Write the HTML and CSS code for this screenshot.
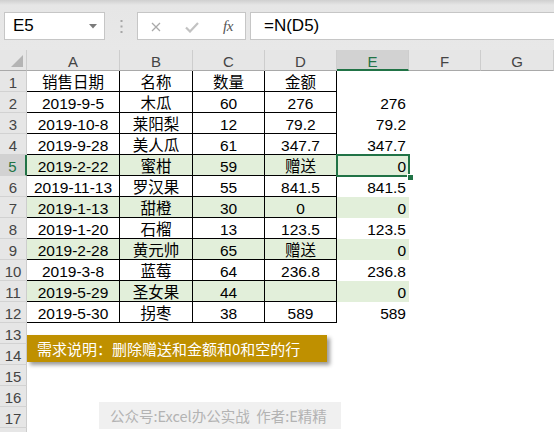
FILE: index.html
```html
<!DOCTYPE html>
<html lang="zh">
<head>
<meta charset="utf-8">
<title>Excel</title>
<link rel="stylesheet" href="styles.css">
</head>
<body>
<div class="app">
  <div class="toolbar">
    <div class="namebox"><span class="nb-text">E5</span><svg class="caret" width="8" height="5" viewBox="0 0 8 5"><path d="M0 0H8L4 4.5Z" fill="#7a7a7a"/></svg></div>
    <svg class="grip" width="3" height="13" viewBox="0 0 3 13"><rect x="0.5" y="0" width="2" height="2" fill="#a6a6a6"/><rect x="0.5" y="5.5" width="2" height="2" fill="#a6a6a6"/><rect x="0.5" y="11" width="2" height="2" fill="#a6a6a6"/></svg>
    <div class="fnbox">
      <svg class="ico-x" width="10" height="10" viewBox="0 0 10 10"><path d="M1 1L9 9M9 1L1 9" stroke="#a9a9a9" stroke-width="1.3" fill="none"/></svg>
      <svg class="ico-ok" width="14" height="11" viewBox="0 0 14 11"><path d="M1 5.5L5 9.5L13 1" stroke="#c2c2c2" stroke-width="2.2" fill="none"/></svg>
      <span class="fx">fx</span>
    </div>
    <div class="formula">=N(D5)</div>
  </div>
  <div class="sheet">
    <div class="grid">
      <div class="corner"><svg width="12" height="12" viewBox="0 0 12 12"><path d="M12 0V12H0Z" fill="#b4b4b4"/></svg></div>
      <div class="ch">A</div><div class="ch">B</div><div class="ch">C</div><div class="ch">D</div><div class="ch cur">E</div><div class="ch">F</div><div class="ch">G</div>

      <div class="rh">1</div><div class="c b">销售日期</div><div class="c b">名称</div><div class="c b">数量</div><div class="c b">金额</div><div class="c r"></div><div class="c"></div><div class="c"></div>
      <div class="rh">2</div><div class="c b">2019-9-5</div><div class="c b">木瓜</div><div class="c b">60</div><div class="c b">276</div><div class="c r">276</div><div class="c"></div><div class="c"></div>
      <div class="rh">3</div><div class="c b">2019-10-8</div><div class="c b">莱阳梨</div><div class="c b">12</div><div class="c b">79.2</div><div class="c r">79.2</div><div class="c"></div><div class="c"></div>
      <div class="rh">4</div><div class="c b">2019-9-28</div><div class="c b">美人瓜</div><div class="c b">61</div><div class="c b">347.7</div><div class="c r">347.7</div><div class="c"></div><div class="c"></div>
      <div class="rh cur">5</div><div class="c b g">2019-2-22</div><div class="c b g">蜜柑</div><div class="c b g">59</div><div class="c b g">赠送</div><div class="c r g sel">0</div><div class="c"></div><div class="c"></div>
      <div class="rh">6</div><div class="c b">2019-11-13</div><div class="c b">罗汉果</div><div class="c b">55</div><div class="c b">841.5</div><div class="c r">841.5</div><div class="c"></div><div class="c"></div>
      <div class="rh">7</div><div class="c b g">2019-1-13</div><div class="c b g">甜橙</div><div class="c b g">30</div><div class="c b g">0</div><div class="c r g">0</div><div class="c"></div><div class="c"></div>
      <div class="rh">8</div><div class="c b">2019-1-20</div><div class="c b">石榴</div><div class="c b">13</div><div class="c b">123.5</div><div class="c r">123.5</div><div class="c"></div><div class="c"></div>
      <div class="rh">9</div><div class="c b g">2019-2-28</div><div class="c b g">黄元帅</div><div class="c b g">65</div><div class="c b g">赠送</div><div class="c r g">0</div><div class="c"></div><div class="c"></div>
      <div class="rh">10</div><div class="c b">2019-3-8</div><div class="c b">蓝莓</div><div class="c b">64</div><div class="c b">236.8</div><div class="c r">236.8</div><div class="c"></div><div class="c"></div>
      <div class="rh">11</div><div class="c b g">2019-5-29</div><div class="c b g">圣女果</div><div class="c b g">44</div><div class="c b g"></div><div class="c r g">0</div><div class="c"></div><div class="c"></div>
      <div class="rh">12</div><div class="c b">2019-5-30</div><div class="c b">拐枣</div><div class="c b">38</div><div class="c b">589</div><div class="c r">589</div><div class="c"></div><div class="c"></div>
      <div class="rh">13</div><div class="c"></div><div class="c"></div><div class="c"></div><div class="c"></div><div class="c"></div><div class="c"></div><div class="c"></div>
      <div class="rh">14</div><div class="c"></div><div class="c"></div><div class="c"></div><div class="c"></div><div class="c"></div><div class="c"></div><div class="c"></div>
      <div class="rh">15</div><div class="c"></div><div class="c"></div><div class="c"></div><div class="c"></div><div class="c"></div><div class="c"></div><div class="c"></div>
      <div class="rh">16</div><div class="c"></div><div class="c"></div><div class="c"></div><div class="c"></div><div class="c"></div><div class="c"></div><div class="c"></div>
      <div class="rh">17</div><div class="c"></div><div class="c"></div><div class="c"></div><div class="c"></div><div class="c"></div><div class="c"></div><div class="c"></div>
      <div class="rh"></div><div class="c"></div><div class="c"></div><div class="c"></div><div class="c"></div><div class="c"></div><div class="c"></div><div class="c"></div>
    </div>
    <div class="banner">需求说明：删除赠送和金额和0和空的行</div>
    <div class="watermark">公众号:Excel办公实战&nbsp;&nbsp;作者:E精精</div>
  </div>
</div>
</body>
</html>
```

FILE: styles.css
```css
html, body {
  margin: 0;
  padding: 0;
  background: #ffffff;
  overflow: hidden;
}

.app {
  width: 554px;
  height: 432px;
  overflow: hidden;
  font-family: "Liberation Sans", "Noto Sans CJK SC", sans-serif;
}

.toolbar {
  height: 50px;
  box-sizing: border-box;
  padding: 12px 0 10px 4px;
  display: flex;
  align-items: stretch;
  background: linear-gradient(#cfcfcf 0px, #e6e6e6 5px, #e8e8e8 100%);
}

.namebox {
  width: 101px;
  box-sizing: border-box;
  background: #fff;
  border: 1px solid #c6c6c6;
  display: flex;
  align-items: center;
  padding: 0 4px 1px 8px;
  font-size: 17px;
  color: #000;
}

.nb-text { flex: 1; }

.caret { margin-top: 1px; margin-right: 3px; }

.grip {
  align-self: center;
  margin: 0 14px 0 15px;
}

.fnbox {
  width: 109px;
  box-sizing: border-box;
  background: #fff;
  border: 1px solid #c6c6c6;
  display: flex;
  align-items: center;
  padding-left: 13px;
}

.ico-x { margin-top: 1px; }

.ico-ok { margin-left: 24px; margin-top: 2px; }

.fx {
  margin-left: 24px;
  font-family: "Liberation Serif", "DejaVu Serif", serif;
  font-style: italic;
  font-size: 15px;
  color: #555;
  letter-spacing: -0.5px;
}

.formula {
  flex: 1;
  margin-left: 4px;
  margin-right: -2px;
  background: #fff;
  border: 1px solid #c6c6c6;
  display: flex;
  align-items: center;
  padding: 0 0 1px 13px;
  font-size: 17px;
  color: #000;
}

.sheet {
  position: relative;
}

.grid {
  display: grid;
  grid-template-columns: 27px 93px 73px 72px 72px 72px 72px 73px;
  grid-auto-rows: 21px;
}

.corner, .ch, .rh, .c {
  box-sizing: border-box;
}

.corner {
  background: #e6e6e6;
  border-right: 1px solid #cdcdcd;
  border-bottom: 1px solid #a9a9a9;
  display: flex;
  align-items: flex-end;
  justify-content: flex-end;
  padding: 0 3px 3px 0;
}

.ch {
  background: #e6e6e6;
  border-right: 1px solid #cdcdcd;
  border-bottom: 1px solid #a9a9a9;
  text-align: center;
  font-size: 15px;
  line-height: 17px;
  padding-top: 3px;
  color: #444;
}

.ch.cur {
  background: #d2d2d2;
  border-bottom: 2px solid #217346;
  color: #217346;
}

.rh {
  background: #e6e6e6;
  border-right: 1px solid #cdcdcd;
  border-bottom: 1px solid #d2d2d2;
  text-align: center;
  font-size: 15px;
  line-height: 16px;
  padding-top: 4px;
  color: #444;
}

.rh.cur {
  background: #d2d2d2;
  border-right: 2px solid #217346;
  color: #217346;
}

.c {
  font-size: 15.5px;
  line-height: 16px;
  padding-top: 4px;
  text-align: center;
  color: #000;
  white-space: nowrap;
  overflow: visible;
}

.c.b {
  border-right: 1px solid #000;
  border-bottom: 1px solid #000;
}

.c.r {
  text-align: right;
  padding-right: 3px;
}

.c.g {
  background: #e2efda;
}

.c.sel {
  position: relative;
  z-index: 2;
  outline: 2px solid #217346;
  outline-offset: -1px;
}

.c.sel::after {
  content: "";
  position: absolute;
  right: -4px;
  bottom: -4px;
  width: 5px;
  height: 5px;
  background: #217346;
  border-left: 1px solid #fff;
  border-top: 1px solid #fff;
}

.banner {
  position: absolute;
  left: 27px;
  top: 285px;
  width: 300px;
  height: 27px;
  box-sizing: border-box;
  background: #bf9000;
  box-shadow: 3px 3px 4px rgba(0, 0, 0, 0.4);
  color: #fff;
  font-family: "Noto Sans CJK SC", sans-serif;
  font-size: 15px;
  line-height: 27px;
  padding-left: 10px;
  white-space: nowrap;
}

.watermark {
  position: absolute;
  left: 99px;
  top: 352px;
  width: 242px;
  height: 27px;
  box-sizing: border-box;
  background: #f0f0f0;
  color: #b3b3b3;
  font-family: "Noto Sans CJK SC", sans-serif;
  font-size: 14.5px;
  line-height: 27px;
  padding-left: 11px;
  white-space: nowrap;
}
```
